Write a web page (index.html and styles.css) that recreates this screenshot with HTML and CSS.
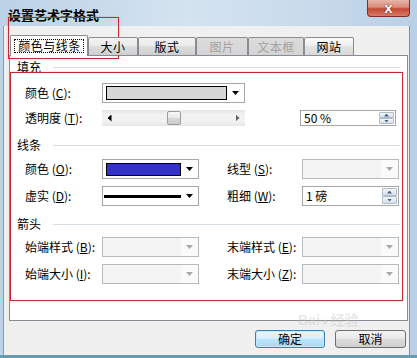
FILE: index.html
```html
<!DOCTYPE html>
<html>
<head>
<meta charset="utf-8">
<title>设置艺术字格式</title>
<link rel="stylesheet" href="styles.css">
</head>
<body>
<div class="window">
  <div class="titlebar">
    <span class="title">设置艺术字格式</span>
    <div class="close"><span>x</span></div>
  </div>
  <div class="client">
    <div class="tabs">
      <div class="tab sel"><span class="focus">颜色与线条</span></div>
      <div class="tab t2">大小</div>
      <div class="tab t3">版式</div>
      <div class="tab t4 dis">图片</div>
      <div class="tab t5 dis">文本框</div>
      <div class="tab t6 hot">网站</div>
    </div>
    <div class="panel">
      <div class="head h1"><span>填充</span><i></i></div>
      <div class="row r1">
        <span class="lbl">颜色 (<u>C</u>):</span>
        <div class="combo w143"><div class="swatch grey"></div><b class="arrow"></b></div>
      </div>
      <div class="row r2">
        <span class="lbl">透明度 (<u>T</u>):</span>
        <div class="slider"><b class="sa l"></b><div class="track"><div class="thumb"></div></div><b class="sa r"></b></div>
        <div class="spin s1"><span class="val">50 %</span><div class="btns"><b class="up"></b><b class="dn"></b></div></div>
      </div>
      <div class="head h2"><span>线条</span><i></i></div>
      <div class="row">
        <span class="lbl">颜色 (<u>O</u>):</span>
        <div class="combo w97"><div class="swatch blue"></div><b class="arrow"></b></div>
        <span class="lbl lbl-r">线型 (<u>S</u>):</span>
        <div class="combo w97 dis"><div class="fill"></div><b class="arrow"></b></div>
      </div>
      <div class="row">
        <span class="lbl">虚实 (<u>D</u>):</span>
        <div class="combo w97 dash"><div class="line"></div><b class="arrow"></b></div>
        <span class="lbl lbl-r">粗细 (<u>W</u>):</span>
        <div class="spin s2"><span class="val">1 磅</span><div class="btns"><b class="up"></b><b class="dn"></b></div></div>
      </div>
      <div class="head h3"><span>箭头</span><i></i></div>
      <div class="row r5">
        <span class="lbl">始端样式 (<u>B</u>):</span>
        <div class="combo w97 dis"><div class="fill"></div><b class="arrow"></b></div>
        <span class="lbl lbl-r">末端样式 (<u>E</u>):</span>
        <div class="combo w97 dis"><div class="fill"></div><b class="arrow"></b></div>
      </div>
      <div class="row">
        <span class="lbl">始端大小 (<u>I</u>):</span>
        <div class="combo w97 dis"><div class="fill"></div><b class="arrow"></b></div>
        <span class="lbl lbl-r">末端大小 (<u>Z</u>):</span>
        <div class="combo w97 dis"><div class="fill"></div><b class="arrow"></b></div>
      </div>
    </div>
    <div class="buttons">
      <div class="btn def">确定</div>
      <div class="btn cancel">取消</div>
    </div>
  </div>
  <div class="bottom-frame"></div>
  <div class="watermark">Bai<span class="paw">●</span>经验</div>
  <div class="annot a1"></div>
  <div class="annot a2"></div>
</div>
</body>
</html>
```
FILE: styles.css
```css
* { box-sizing: border-box; }
html, body { margin: 0; padding: 0; }
body {
  width: 417px; height: 358px; overflow: hidden;
  font-family: "Noto Sans CJK SC", "Liberation Sans", sans-serif;
  font-size: 12px; color: #000;
}
.window {
  position: relative; width: 417px; height: 358px;
  background: linear-gradient(to right, #bcd2e6, #d4e3f0 45%, #c8daeb 75%, #b9d0e6);
  display: flex; flex-direction: column;
}
.titlebar {
  height: 26px; flex: none;
  display: flex; align-items: flex-start; justify-content: space-between;
  padding-left: 8px;
}
.title { font-size: 13px; font-weight: bold; line-height: 15px; margin-top: 7px; }
.close {
  width: 43px; height: 17px; margin-right: 7px;
  border: 1px solid #7a3026; border-top: none; border-radius: 0 0 4px 4px;
  background: linear-gradient(#eab5aa, #d98a78 45%, #c24a36 55%, #d87a64);
  display: flex; align-items: center; justify-content: center;
}
.close span {
  font-family: "Liberation Sans", sans-serif; font-weight: bold; font-size: 15px; line-height: 16px;
  color: #fff; text-shadow: 0 0 1px #4a1a12, 0 0 1px #4a1a12;
}
.client {
  flex: none;
  margin-left: 3px; width: 407px; height: 329px;
  background: #f0f0f0;
  border-left: 1px solid #8c9aa6; border-right: 1px solid #7f8e9b;
  padding: 9px 1px 0 5px;
}
.bottom-frame { flex: none; height: 3px; background: #6a9bb0; }

/* tabs */
.tabs { display: flex; align-items: flex-end; height: 20px; padding-left: 1px; position: relative; z-index: 1; }
.tab {
  height: 18px; border: 1px solid #898c95; border-bottom: none; border-radius: 2px 2px 0 0;
  background: linear-gradient(#f2f2f2, #ebebeb 45%, #dddddd 50%, #cfcfcf);
  display: flex; align-items: center; justify-content: center;
  font-size: 12px; letter-spacing: 0.5px; line-height: 16px; white-space: nowrap;
}
.tab.sel { width: 78px; height: 21px; margin-bottom: -1px; background: #fff; }
.focus { border: 1px dotted #000; padding: 0 2px 0 3px; line-height: 12px; height: 14px; }
.t2 { width: 50px; }
.t3 { width: 58px; }
.t4 { width: 52px; }
.t5 { width: 56px; }
.t6 { width: 50px; }
.tab.dis { color: #a3a3a3; background: linear-gradient(#dcdcdc, #d4d4d4); }
.tab.hot { background: linear-gradient(#fbfbfb, #ececec 50%, #e2e2e2 50%, #d9d9d9); }

/* panel */
.panel { height: 266px; border: 1px solid #898c95; background: #fff; padding: 0 7px; }
.head { display: flex; align-items: center; height: 14px; }
.head span { line-height: 14px; }
.head i { flex: 1; height: 1px; background: #d5dfe5; margin-left: 12px; }
.h1 { margin-top: 4px; }
.h2 { margin-top: 12px; }
.h3 { margin-top: 11px; }
.row { display: flex; align-items: center; height: 20px; margin-left: 8px; margin-top: 7px; }
.r1 { margin-top: 9px; }
.r2 { height: 16px; }
.r5 { margin-top: 6px; }
.lbl { width: 77px; white-space: nowrap; line-height: 14px; }
.lbl-r { width: 75px; margin-left: 28px; }

/* combos */
.combo { height: 20px; border: 1px solid #a7a7a7; background: #fff; display: flex; }
.w143 { width: 143px; }
.w97 { width: 97px; }
.swatch { flex: 1; margin: 2px 0 2px 3px; border: 1px solid #000; }
.w97 .swatch { margin-top: 3px; }
.grey { background: #d6d6d6; }
.blue { background: #3333cc; }
.arrow { width: 17px; flex: none; display: flex; align-items: center; justify-content: center; }
.arrow::after {
  content: ""; width: 7px; height: 4px; background: #000;
  clip-path: polygon(0 0, 100% 0, 50% 100%);
}
.dash { align-items: center; }
.dash .line { flex: 1; height: 3px; background: #000; margin-left: 1px; }
.dash .arrow { height: 18px; }
.combo.dis { border-color: #b5babf; background: #f4f4f4; }
.combo.dis .fill { flex: 1; }
.combo.dis .arrow { background: #fafafa; }
.combo.dis .arrow::after { background: #a9a9a9; }

/* slider */
.slider {
  width: 143px; height: 16px; display: flex; align-items: center;
  background: linear-gradient(#e5e5e5, #f2f2f2 30%, #f2f2f2 70%, #e7e7e7);
}
.sa { width: 15px; height: 16px; flex: none; display: flex; align-items: center; justify-content: center; }
.sa::after { content: ""; width: 4px; height: 7px; background: #000; }
.sa.l::after { clip-path: polygon(100% 0, 100% 100%, 0 50%); }
.sa.r::after { clip-path: polygon(0 0, 100% 50%, 0 100%); background: #606060; }
.track { flex: 1; display: flex; align-items: center; }
.thumb {
  width: 14px; height: 14px; margin-left: 50px;
  border: 1px solid #9c9c9c; border-radius: 2px;
  background: linear-gradient(#f8f8f8, #e9e9e9 50%, #d8d8d8 50%, #cdcdcd);
}

/* spin */
.spin { border: 1px solid #a7a7a7; background: #fff; display: flex; }
.s1 { width: 96px; height: 16px; margin-left: 55px; }
.s2 { width: 97px; height: 20px; }
.spin .val { flex: 1; padding-left: 3px; line-height: 14px; align-self: center; }
.spin .btns { width: 15px; margin: 1px 1px 1px 0; display: flex; flex-direction: column; }
.spin .btns b {
  flex: 1; border: 1px solid #b0bcc8; border-radius: 1px;
  background: linear-gradient(#f3f6f9, #d5dfe9);
  display: flex; align-items: center; justify-content: center;
}
.spin .btns b::after {
  content: ""; width: 5px; height: 3px; background: #4d6185;
  clip-path: polygon(50% 0, 100% 100%, 0 100%);
}
.spin .btns b.dn::after { clip-path: polygon(0 0, 100% 0, 50% 100%); }

/* buttons */
.buttons { display: flex; justify-content: flex-end; gap: 10px; margin-top: 9px; padding-right: 2px; }
.btn {
  width: 70px; height: 18px; border: 1px solid #707070; border-radius: 3px;
  background: linear-gradient(#f2f2f2, #ebebeb 45%, #dddddd 50%, #cfcfcf);
  display: flex; align-items: center; justify-content: center; line-height: 14px;
}
.btn.cancel { width: 71px; }
.btn.def {
  border-color: #3c7fb1; box-shadow: inset 0 0 0 1px #c4eafb;
  background: linear-gradient(#eaf6fd, #d9f0fc 45%, #bee6fd 50%, #a7d9f5);
}

/* watermark */
.watermark {
  position: absolute; left: 298px; top: 312px;
  font-family: "Liberation Sans", "Noto Sans CJK SC", sans-serif;
  font-size: 14px; font-weight: bold; line-height: 16px;
  color: rgba(190, 190, 190, 0.35); pointer-events: none;
}
.paw { font-size: 11px; margin: 0 2px; }

/* red annotation boxes */
.annot {
  position: absolute; border: 1px solid #c42a30;
  box-shadow: 0 0 2px rgba(230, 90, 90, 0.45);
  pointer-events: none;
}
.a1 { left: 8px; top: 17px; width: 111px; height: 42px; }
.a2 { left: 10px; top: 72px; width: 393px; height: 229px; }
```
